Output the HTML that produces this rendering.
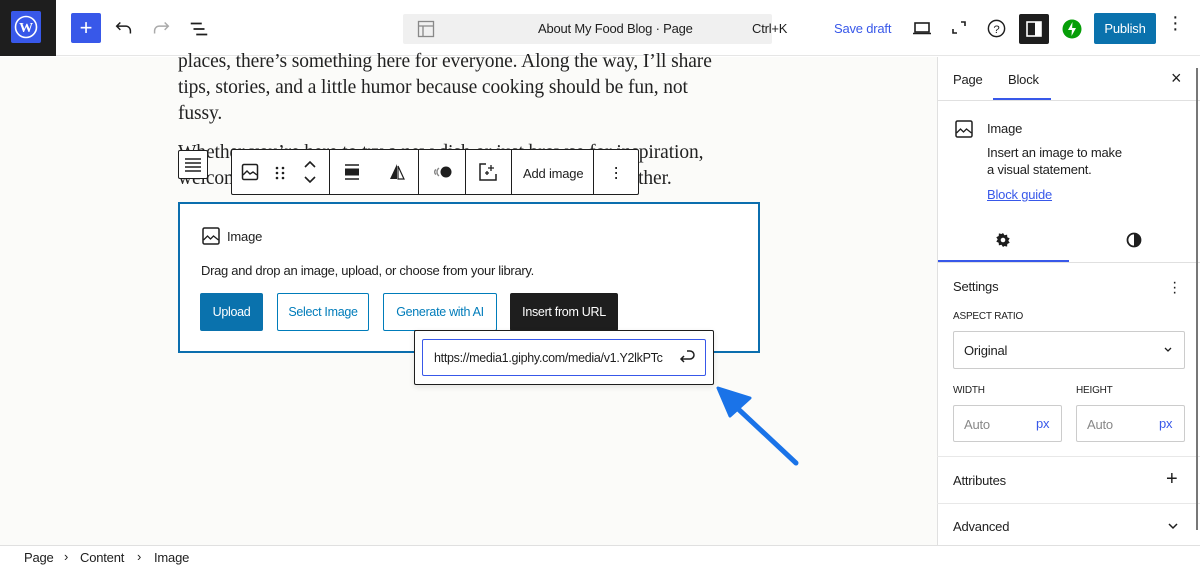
<!DOCTYPE html>
<html><head><meta charset="utf-8"><style>
*{box-sizing:border-box;margin:0;padding:0}
body{width:1200px;height:568px;overflow:hidden;background:#fff;font-family:"Liberation Sans",sans-serif;color:#1e1e1e;position:relative;font-size:13px;letter-spacing:-0.2px}
.a{position:absolute}
.serif{font-family:"Liberation Serif",serif;font-size:19.5px;color:#222;line-height:26px;letter-spacing:-0.1px;white-space:nowrap}
.btn{position:absolute;height:38px;border:1px solid #007cba;border-radius:2px;font-size:12.5px;display:flex;align-items:center;justify-content:center;color:#007cba;background:#fff;letter-spacing:-0.3px}
svg{display:block}
</style></head><body>
<div class="a" style="left:0;top:0;width:1200px;height:56px;background:#fff;border-bottom:1px solid #e6e6e6"></div>
<div class="a" style="left:0;top:0;width:56px;height:56px;background:#1e1e1e"></div>
<div class="a" style="left:11px;top:11px;width:30px;height:32px;background:#3858e9;border-radius:2px;display:flex;align-items:center;justify-content:center">
<svg width="24" height="24" viewBox="0 0 24 24"><circle cx="12" cy="12" r="10.5" fill="none" stroke="#fff" stroke-width="1.6"/><text x="12" y="17" font-size="14" font-weight="bold" fill="#fff" text-anchor="middle" font-family="Liberation Serif">W</text></svg></div>
<div class="a" style="left:71px;top:13px;width:30px;height:30px;background:#3858e9;border-radius:2px;color:#fff;font-size:22px;text-align:center;line-height:29px">+</div>
<svg class="a" style="left:113px;top:17px" width="22" height="22" viewBox="0 0 24 24"><path d="M8 6L4 10l4 4M4 10h10a5 5 0 0 1 5 5v3" fill="none" stroke="#1e1e1e" stroke-width="1.6"/></svg>
<svg class="a" style="left:150px;top:17px" width="22" height="22" viewBox="0 0 24 24"><path d="M16 6l4 4-4 4M20 10H10a5 5 0 0 0-5 5v3" fill="none" stroke="#aaa" stroke-width="1.6"/></svg>
<svg class="a" style="left:188px;top:18px" width="22" height="22" viewBox="0 0 24 24"><path d="M3 6h12M6 12h12M9 18h12" stroke="#1e1e1e" stroke-width="1.8"/></svg>
<div class="a" style="left:403px;top:14px;width:369px;height:30px;background:#f0f0f0;border-radius:2px"></div>
<svg class="a" style="left:417px;top:20px" width="18" height="18" viewBox="0 0 18 18"><rect x="1.5" y="1.5" width="15" height="15" fill="none" stroke="#888" stroke-width="1.3"/><path d="M1.5 6h15M6 6v10.5" stroke="#888" stroke-width="1.3"/></svg>
<div class="a" style="left:538px;top:21px;font-size:13px;color:#1e1e1e">About My Food Blog · Page</div>
<div class="a" style="left:752px;top:21px;font-size:13px;color:#1e1e1e">Ctrl+K</div>
<div class="a" style="left:834px;top:21px;font-size:13px;color:#3858e9">Save draft</div>
<svg class="a" style="left:911px;top:18px" width="22" height="20" viewBox="0 0 22 20"><rect x="4" y="5" width="14" height="9" fill="none" stroke="#1e1e1e" stroke-width="1.6"/><path d="M2 15.5h18" stroke="#1e1e1e" stroke-width="1.6"/></svg>
<svg class="a" style="left:949px;top:18px" width="20" height="20" viewBox="0 0 20 20"><path d="M4 11v4h4M12 4h4v4" fill="none" stroke="#1e1e1e" stroke-width="1.6"/></svg>
<svg class="a" style="left:986px;top:18px" width="21" height="21" viewBox="0 0 22 22"><circle cx="11" cy="11" r="8.5" fill="none" stroke="#1e1e1e" stroke-width="1.5"/><text x="11" y="15.5" font-size="12" text-anchor="middle" fill="#1e1e1e" font-family="Liberation Sans">?</text></svg>
<div class="a" style="left:1019px;top:14px;width:30px;height:30px;background:#1e1e1e;border-radius:2px"></div>
<svg class="a" style="left:1024px;top:19px" width="20" height="20" viewBox="0 0 20 20"><rect x="3" y="3" width="14" height="14" fill="none" stroke="#fff" stroke-width="1.6"/><rect x="11" y="3" width="6" height="14" fill="#fff"/></svg>
<svg class="a" style="left:1062px;top:19px" width="20" height="20" viewBox="0 0 20 20"><circle cx="10" cy="10" r="9.5" fill="#069e08"/><path d="M10.5 3l-4.5 8h4zM9.5 17l4.5-8h-4z" fill="#fff"/></svg>
<div class="a" style="left:1094px;top:13px;width:62px;height:31px;background:#0a72ad;border-radius:2px;color:#fff;font-size:13px;text-align:center;line-height:31px">Publish</div>
<div class="a" style="left:1172px;top:14px;font-size:20px;line-height:6px;color:#1e1e1e;text-align:center;width:6px">·<br>·<br>·</div>
<div class="a" style="left:0;top:57px;width:937px;height:488px;background:#fbfbf9"></div>
<div class="a serif" style="left:178px;top:49px">places, there’s something here for everyone. Along the way, I’ll share<br>tips, stories, and a little humor because cooking should be fun, not<br>fussy.</div>
<div class="a serif" style="left:178px;top:140px">Whether you’re here to try a new dish or just browse for inspiration,<br>welcome! Let’s get cooking and make something great together.</div>
<div class="a" style="left:178px;top:150px;width:30px;height:29px;background:#fff;border:1px solid #1e1e1e;border-radius:2px"></div>
<svg class="a" style="left:183px;top:156px" width="20" height="18" viewBox="0 0 20 18"><path d="M2 3h16M2 7h16M2 11h16M2 15h16" stroke="#1e1e1e" stroke-width="1.5"/></svg>
<div class="a" style="left:231px;top:149px;width:408px;height:46px;background:#fff;border:1px solid #1e1e1e;border-radius:2px"></div>
<div class="a" style="left:329px;top:150px;width:1px;height:44px;background:#1e1e1e"></div>
<div class="a" style="left:418px;top:150px;width:1px;height:44px;background:#1e1e1e"></div>
<div class="a" style="left:465px;top:150px;width:1px;height:44px;background:#1e1e1e"></div>
<div class="a" style="left:511px;top:150px;width:1px;height:44px;background:#1e1e1e"></div>
<div class="a" style="left:593px;top:150px;width:1px;height:44px;background:#1e1e1e"></div>
<svg class="a" style="left:241px;top:163px" width="18" height="18" viewBox="0 0 18 18"><rect x="1.5" y="1.5" width="15" height="15" rx="1.5" fill="none" stroke="#1e1e1e" stroke-width="1.5"/><path d="M2 12l4-4 3 3 3-2 4 3" fill="none" stroke="#1e1e1e" stroke-width="1.4"/></svg>
<svg class="a" style="left:274px;top:165px" width="12" height="16" viewBox="0 0 12 16"><g fill="#1e1e1e"><circle cx="3" cy="3" r="1.3"/><circle cx="9" cy="3" r="1.3"/><circle cx="3" cy="8" r="1.3"/><circle cx="9" cy="8" r="1.3"/><circle cx="3" cy="13" r="1.3"/><circle cx="9" cy="13" r="1.3"/></g></svg>
<svg class="a" style="left:302px;top:159px" width="16" height="26" viewBox="0 0 16 26"><path d="M3 8l5-5 5 5M3 18l5 5 5-5" fill="none" stroke="#1e1e1e" stroke-width="1.6"/></svg>
<svg class="a" style="left:342px;top:163px" width="20" height="18" viewBox="0 0 20 18"><path d="M3 2h14M3 16h14" stroke="#1e1e1e" stroke-width="1.5"/><rect x="3" y="5.5" width="14" height="7" fill="#1e1e1e"/></svg>
<svg class="a" style="left:388px;top:163px" width="18" height="18" viewBox="0 0 18 18"><path d="M9 1L2 16h7z" fill="#1e1e1e"/><path d="M10 3l6 13h-6z" fill="none" stroke="#1e1e1e" stroke-width="1.2"/></svg>
<svg class="a" style="left:432px;top:164px" width="22" height="16" viewBox="0 0 22 16"><circle cx="14" cy="8" r="5.5" fill="#1e1e1e"/><path d="M7 4a5 5 0 0 0 0 8M4 5.5a3 3 0 0 0 0 5" fill="none" stroke="#888" stroke-width="1.4"/></svg>
<svg class="a" style="left:478px;top:162px" width="20" height="20" viewBox="0 0 20 20"><path d="M8 2H2v16h16v-6" fill="none" stroke="#1e1e1e" stroke-width="1.5"/><path d="M13 3v6M10 6h6M7 11h4M9 9v4" stroke="#1e1e1e" stroke-width="1.3"/></svg>
<div class="a" style="left:523px;top:166px;font-size:13px">Add image</div>
<div class="a" style="left:613px;top:165px;font-size:18px;line-height:5px;width:6px;text-align:center">·<br>·<br>·</div>
<div class="a" style="left:178px;top:202px;width:582px;height:151px;border:2px solid #0b6eae;background:#fff"></div>
<svg class="a" style="left:202px;top:227px" width="18" height="18" viewBox="0 0 18 18"><rect x="1" y="1" width="16" height="16" rx="1.5" fill="none" stroke="#1e1e1e" stroke-width="1.5"/><path d="M1.5 13l4-4 3 3 3-3 5 4" fill="none" stroke="#1e1e1e" stroke-width="1.3"/></svg>
<div class="a" style="left:227px;top:229px;font-size:13px;font-weight:500">Image</div>
<div class="a" style="left:201px;top:263px;font-size:13px;letter-spacing:-0.3px">Drag and drop an image, upload, or choose from your library.</div>
<div class="btn" style="left:200px;top:293px;width:63px;background:#0a72ad;color:#fff;border-color:#0a72ad">Upload</div>
<div class="btn" style="left:277px;top:293px;width:92px">Select Image</div>
<div class="btn" style="left:383px;top:293px;width:114px">Generate with AI</div>
<div class="btn" style="left:510px;top:293px;width:108px;background:#1e1e1e;color:#fff;border-color:#1e1e1e">Insert from URL</div>
<div class="a" style="left:414px;top:330px;width:300px;height:55px;background:#fff;border:1px solid #1e1e1e;border-radius:2px;box-shadow:0 2px 6px rgba(0,0,0,.1)"></div>
<div class="a" style="left:422px;top:339px;width:284px;height:37px;border:1.5px solid #3858e9;border-radius:2px;background:#fff"></div>
<div class="a" style="left:434px;top:351px;font-size:12.5px;width:238px;overflow:hidden;white-space:nowrap;letter-spacing:-0.3px">https://media1.giphy.com/media/v1.Y2lkPTc</div>
<svg class="a" style="left:677px;top:348px" width="20" height="18" viewBox="0 0 20 18"><path d="M10 3h3a4 4 0 0 1 0 8H4M7 8l-3 3 3 3" fill="none" stroke="#1e1e1e" stroke-width="1.5"/></svg>
<svg class="a" style="left:710px;top:382px" width="95" height="90" viewBox="0 0 95 90"><path d="M86 81L25 24" stroke="#1a73e8" stroke-width="5" stroke-linecap="round"/><path d="M8 6L40 16 20 34z" fill="#1a73e8" stroke="#1a73e8" stroke-width="3" stroke-linejoin="round"/></svg>
<div class="a" style="left:937px;top:57px;width:263px;height:488px;background:#fff;border-left:1px solid #e0e0e0"></div>
<div class="a" style="left:937px;top:100px;width:263px;height:1px;background:#e0e0e0"></div>
<div class="a" style="left:953px;top:72px;font-size:13px">Page</div>
<div class="a" style="left:1008px;top:72px;font-size:13px">Block</div>
<div class="a" style="left:993px;top:98px;width:58px;height:2px;background:#3858e9"></div>
<div class="a" style="left:1171px;top:68px;font-size:18px">×</div>
<svg class="a" style="left:955px;top:120px" width="18" height="18" viewBox="0 0 18 18"><rect x="1" y="1" width="16" height="16" rx="1.5" fill="none" stroke="#1e1e1e" stroke-width="1.5"/><path d="M1.5 13l4-4 3 3 3-3 5 4" fill="none" stroke="#1e1e1e" stroke-width="1.3"/></svg>
<div class="a" style="left:987px;top:121px;font-size:13px">Image</div>
<div class="a" style="left:987px;top:144px;font-size:13px;line-height:17px">Insert an image to make<br>a visual statement.</div>
<div class="a" style="left:987px;top:187px;font-size:13px;color:#3858e9;text-decoration:underline">Block guide</div>
<svg class="a" style="left:995px;top:232px" width="16" height="16" viewBox="0 0 16 16"><path d="M8 1l1.5 2.2 2.6-.6.2 2.6 2.4 1.2-1.4 2.2 1.4 2.2-2.4 1.2-.2 2.6-2.6-.6L8 15l-1.5-2.2-2.6.6-.2-2.6L1.3 9.6 2.7 7.4 1.3 5.2l2.4-1.2.2-2.6 2.6.6z" fill="#1e1e1e"/><circle cx="8" cy="8" r="2.3" fill="#fff"/></svg>
<svg class="a" style="left:1126px;top:232px" width="16" height="16" viewBox="0 0 16 16"><circle cx="8" cy="8" r="6.5" fill="none" stroke="#1e1e1e" stroke-width="1.8"/><path d="M8 1.5a6.5 6.5 0 0 1 0 13z" fill="#1e1e1e"/></svg>
<div class="a" style="left:937px;top:262px;width:263px;height:1px;background:#e0e0e0"></div>
<div class="a" style="left:938px;top:260px;width:131px;height:2px;background:#3858e9"></div>
<div class="a" style="left:953px;top:279px;font-size:13px">Settings</div>
<div class="a" style="left:1172px;top:280px;font-size:16px;line-height:5px;width:5px;text-align:center">·<br>·<br>·</div>
<div class="a" style="left:953px;top:311px;font-size:10px">ASPECT RATIO</div>
<div class="a" style="left:953px;top:331px;width:232px;height:38px;border:1px solid #ccc;border-radius:2px"></div>
<div class="a" style="left:964px;top:343px;font-size:13px">Original</div>
<svg class="a" style="left:1163px;top:345px" width="10" height="8" viewBox="0 0 10 8"><path d="M2 3l3 3 3-3" fill="none" stroke="#1e1e1e" stroke-width="1.3"/></svg>
<div class="a" style="left:953px;top:385px;font-size:10px">WIDTH</div>
<div class="a" style="left:1076px;top:385px;font-size:10px">HEIGHT</div>
<div class="a" style="left:953px;top:405px;width:109px;height:37px;border:1px solid #ccc;border-radius:2px"></div>
<div class="a" style="left:1076px;top:405px;width:109px;height:37px;border:1px solid #ccc;border-radius:2px"></div>
<div class="a" style="left:964px;top:417px;font-size:13px;color:#888">Auto</div>
<div class="a" style="left:1036px;top:416px;font-size:13px;color:#3858e9">px</div>
<div class="a" style="left:1087px;top:417px;font-size:13px;color:#888">Auto</div>
<div class="a" style="left:1159px;top:416px;font-size:13px;color:#3858e9">px</div>
<div class="a" style="left:937px;top:456px;width:263px;height:1px;background:#e8e8e8"></div>
<div class="a" style="left:953px;top:473px;font-size:13px">Attributes</div>
<div class="a" style="left:1166px;top:468px;font-size:20px">+</div>
<div class="a" style="left:937px;top:503px;width:263px;height:1px;background:#e8e8e8"></div>
<div class="a" style="left:953px;top:519px;font-size:13px">Advanced</div>
<svg class="a" style="left:1167px;top:522px" width="12" height="8" viewBox="0 0 12 8"><path d="M2 2l4 4 4-4" fill="none" stroke="#1e1e1e" stroke-width="1.5"/></svg>
<div class="a" style="left:1196px;top:68px;width:2px;height:462px;background:#777"></div>
<div class="a" style="left:0;top:545px;width:1200px;height:23px;background:#fff;border-top:1px solid #e0e0e0"></div>
<div class="a" style="left:24px;top:550px;font-size:13px">Page</div>
<div class="a" style="left:64px;top:549px;font-size:13px">›</div>
<div class="a" style="left:80px;top:550px;font-size:13px">Content</div>
<div class="a" style="left:137px;top:549px;font-size:13px">›</div>
<div class="a" style="left:154px;top:550px;font-size:13px">Image</div>
</body></html>
